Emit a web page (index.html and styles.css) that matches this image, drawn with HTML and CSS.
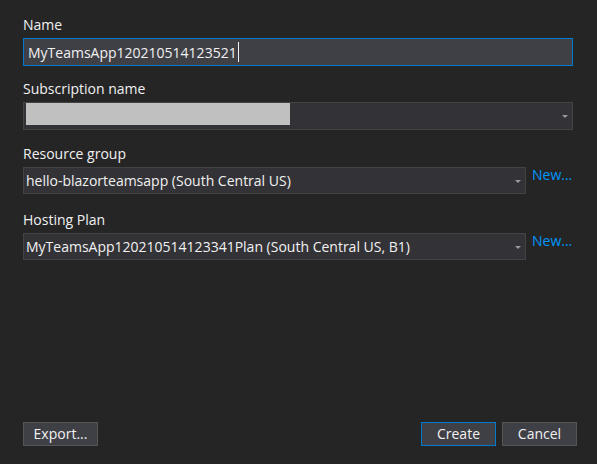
FILE: index.html
```html
<!DOCTYPE html>
<html>
<head>
<meta charset="utf-8">
<link rel="stylesheet" href="styles.css">
</head>
<body>
<div class="dialog">
  <div class="form">
    <div class="field field-name">
      <div class="label">Name</div>
      <div class="textbox"><span class="value">MyTeamsApp120210514123521</span><span class="caret"></span></div>
    </div>
    <div class="field field-sub">
      <div class="label">Subscription name</div>
      <div class="combo combo-wide">
        <div class="redacted"></div>
        <span class="arrow"></span>
      </div>
    </div>
    <div class="field field-rg">
      <div class="label">Resource group</div>
      <div class="row">
        <div class="combo combo-narrow">
          <span class="value">hello-blazorteamsapp (South Central US)</span>
          <span class="arrow"></span>
        </div>
        <span class="link">New...</span>
      </div>
    </div>
    <div class="field field-hp">
      <div class="label">Hosting Plan</div>
      <div class="row">
        <div class="combo combo-narrow">
          <span class="value">MyTeamsApp120210514123341Plan (South Central US, B1)</span>
          <span class="arrow"></span>
        </div>
        <span class="link">New...</span>
      </div>
    </div>
  </div>
  <div class="buttons">
    <button class="btn">Export...</button>
    <div class="spacer"></div>
    <button class="btn btn-default">Create</button>
    <button class="btn">Cancel</button>
  </div>
</div>
</body>
</html>
```
FILE: styles.css
```css
html, body {
  margin: 0;
  padding: 0;
  background: #252526;
}
body {
  font-family: "Open Sans", "Noto Sans", sans-serif;
  font-size: 14px;
  color: #f1f1f1;
}
.dialog {
  width: 597px;
  height: 464px;
  box-sizing: border-box;
  padding: 15px 20px 18px 23px;
  display: flex;
  flex-direction: column;
}
.form {
  flex: 1;
  display: flex;
  flex-direction: column;
  padding-right: 4px;
}
.field-sub { margin-top: 13px; }
.field-rg { margin-top: 14px; }
.field-hp { margin-top: 16px; }
.label {
  height: 19px;
  line-height: 19px;
  margin-bottom: 4px;
  color: #f1f1f1;
}
.textbox {
  height: 28px;
  box-sizing: border-box;
  border: 1px solid #007acc;
  background: #3f3f46;
  display: flex;
  align-items: center;
  padding-left: 4px;
  line-height: 19px;
}
.caret {
  display: inline-block;
  width: 1px;
  height: 20px;
  background: #f1f1f1;
  margin-left: 1px;
}
.combo {
  position: relative;
  box-sizing: border-box;
  border: 1px solid #434346;
  background: #333337;
  display: flex;
  align-items: center;
}
.combo-wide {
  height: 28px;
  align-items: flex-start;
  padding-left: 2px;
}
.combo-narrow {
  width: 503px;
  height: 27px;
  padding-left: 2px;
  line-height: 19px;
}
.redacted {
  width: 264px;
  height: 22px;
  background: #c0c0c0;
}
.arrow {
  position: absolute;
  right: 4px;
  top: 50%;
  margin-top: -1px;
  width: 0;
  height: 0;
  border-left: 3px solid transparent;
  border-right: 3px solid transparent;
  border-top: 3px solid #999999;
}
.row {
  display: flex;
  align-items: flex-start;
  gap: 6px;
}
.link {
  color: #0097fb;
  line-height: 19px;
  margin-top: -2px;
}
.buttons {
  display: flex;
  gap: 6px;
}
.spacer { flex: 1; }
.btn {
  width: 75px;
  height: 24px;
  box-sizing: border-box;
  background: #3f3f46;
  border: 1px solid #555555;
  color: #f1f1f1;
  font-family: "Open Sans", "Noto Sans", sans-serif;
  font-size: 14px;
  padding: 0;
  line-height: 20px;
}
.btn-default {
  border-color: #007acc;
}
```
